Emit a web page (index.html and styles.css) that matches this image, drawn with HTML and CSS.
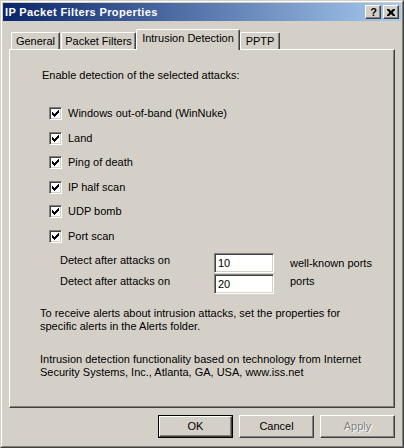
FILE: index.html
```html
<!DOCTYPE html>
<html>
<head>
<meta charset="utf-8">
<link rel="stylesheet" href="styles.css">
</head>
<body>
<div class="window">
  <div class="frame">
    <div class="titlebar">
      <span class="title">IP Packet Filters Properties</span>
      <div class="caption-btns">
        <span class="cbtn help">?</span>
        <span class="cbtn close"><svg width="8" height="7" viewBox="0 0 8 7"><path d="M0 0h2l2 2 2-2h2v1l-2 2v1l2 2v1h-2l-2-2-2 2h-2v-1l2-2v-1l-2-2z" fill="#000"/></svg></span>
      </div>
    </div>
    <div class="body">
      <div class="tabs">
        <div class="tab t-general">General</div>
        <div class="tab t-filters">Packet Filters</div>
        <div class="tab active t-ids">Intrusion Detection</div>
        <div class="tab t-pptp">PPTP</div>
      </div>
      <div class="panel">
        <p class="intro">Enable detection of the selected attacks:</p>
        <ul class="checks">
          <li><span class="cb"></span>Windows out-of-band (WinNuke)</li>
          <li><span class="cb"></span>Land</li>
          <li><span class="cb"></span>Ping of death</li>
          <li><span class="cb"></span>IP half scan</li>
          <li><span class="cb"></span>UDP bomb</li>
          <li><span class="cb"></span>Port scan</li>
        </ul>
        <div class="detect">
          <span class="dl">Detect after attacks on</span>
          <span class="field">10</span>
          <span class="unit u1">well-known ports</span>
          <span class="dl">Detect after attacks on</span>
          <span class="field">20</span>
          <span class="unit u2">ports</span>
        </div>
        <p class="note">To receive alerts about intrusion attacks, set the properties for<br>specific alerts in the Alerts folder.</p>
        <p class="note note2">Intrusion detection functionality based on technology from Internet<br>Security Systems, Inc., Atlanta, GA, USA, www.iss.net</p>
      </div>
      <div class="buttons">
        <span class="btn default"><span class="btn-in">OK</span></span>
        <span class="btn">Cancel</span>
        <span class="btn disabled">Apply</span>
      </div>
    </div>
  </div>
</div>
</body>
</html>
```
FILE: styles.css
```css
html, body {
  margin: 0;
  padding: 0;
  background: #d4d0c8;
}
body {
  width: 404px;
  height: 448px;
  font-family: "Liberation Sans", Arial, sans-serif;
  font-size: 11px;
  color: #000;
}
.window {
  box-sizing: border-box;
  width: 404px;
  height: 448px;
  border: 1px solid;
  border-color: #d4d0c8 #404040 #404040 #d4d0c8;
}
.frame {
  box-sizing: border-box;
  height: 100%;
  border: 1px solid;
  border-color: #ffffff #808080 #808080 #ffffff;
  padding: 1px;
  background: #d4d0c8;
}
.titlebar {
  height: 18px;
  background: linear-gradient(to right, #0a246a, #a6caf0);
  display: flex;
  align-items: center;
  justify-content: space-between;
}
.title {
  color: #fff;
  font-weight: bold;
  font-size: 11px;
  letter-spacing: 0.37px;
  padding-left: 2px;
  line-height: 13px;
}
.caption-btns {
  display: flex;
  gap: 2px;
  padding-right: 2px;
}
.cbtn {
  box-sizing: border-box;
  width: 16px;
  height: 14px;
  background: #d4d0c8;
  border: 1px solid;
  border-color: #ffffff #404040 #404040 #ffffff;
  box-shadow: inset -1px -1px #808080;
  display: flex;
  align-items: center;
  justify-content: center;
  font-weight: bold;
  font-size: 11px;
  line-height: 11px;
}
.cbtn.help { padding-left: 1px; }
.cbtn.close svg { display: block; }
.body {
  padding: 0 6px;
}
.tabs {
  height: 28px;
  display: flex;
  align-items: flex-end;
  padding-left: 2px;
  position: relative;
  z-index: 1;
}
.tab {
  box-sizing: border-box;
  height: 17px;
  border-top: 1px solid #fff;
  border-left: 1px solid #fff;
  border-right: 1px solid #404040;
  box-shadow: inset -1px 0 #808080;
  border-top-left-radius: 2px;
  border-top-right-radius: 2px;
  padding-top: 2px;
  line-height: 13px;
  text-align: center;
  background: #d4d0c8;
}
.t-general { width: 49px; margin-right: 1px; }
.t-filters { width: 75px; }
.t-ids { width: 104px; }
.t-pptp { width: 40px; }
.tab.active {
  height: 21px;
  margin-bottom: -1px;
  padding-top: 2px;
}
.panel {
  box-sizing: border-box;
  height: 359px;
  border: 1px solid;
  border-color: #ffffff #404040 #404040 #ffffff;
  box-shadow: inset -1px -1px #808080;
  padding: 19px 0 0 0;
}
p { margin: 0; }
.intro {
  line-height: 13px;
  padding-left: 32px;
}
.checks {
  list-style: none;
  margin: 25px 0 0 39px;
  padding: 0;
  display: flex;
  flex-direction: column;
  gap: 11.6px;
}
.checks li {
  display: flex;
  align-items: center;
  height: 13px;
  line-height: 13px;
}
.cb {
  box-sizing: border-box;
  width: 13px;
  height: 13px;
  margin-right: 6px;
  border: 1px solid;
  border-color: #808080 #ffffff #ffffff #808080;
  box-shadow: inset 1px 1px #404040, inset -1px -1px #d4d0c8;
  background: #fff url("data:image/svg+xml,%3Csvg xmlns='http://www.w3.org/2000/svg' width='11' height='11'%3E%3Cpath d='M2 4v3h1v1h1v1h1v-1h1v-1h1v-1h1v-1h1v-3h-1v1h-1v1h-1v1h-1v1h-1v-1h-1v-1h-1v-1z' fill='%23000'/%3E%3C/svg%3E") no-repeat 0 0;
}
.detect {
  display: grid;
  grid-template-columns: 154px 60px auto;
  grid-auto-rows: 21px;
  margin: 10px 0 0 50px;
}
.dl {
  line-height: 13px;
  padding-top: 1px;
}
.field {
  box-sizing: border-box;
  width: 60px;
  height: 20px;
  border: 1px solid;
  border-color: #808080 #ffffff #ffffff #808080;
  box-shadow: inset 1px 1px #404040, inset -1px -1px #d4d0c8;
  background: #fff;
  padding: 3px 0 0 3px;
  line-height: 13px;
}
.unit {
  padding-left: 16px;
  line-height: 13px;
}
.u1 { padding-top: 4px; }
.u2 { padding-top: 1px; }
.note {
  line-height: 13px;
  padding-left: 30px;
}
.detect + .note { margin-top: 12px; }
.note2 { margin-top: 20px; }
.buttons {
  display: flex;
  justify-content: flex-end;
  gap: 6px;
  margin-top: 7px;
}
.btn {
  box-sizing: border-box;
  width: 75px;
  height: 23px;
  border: 1px solid;
  border-color: #ffffff #404040 #404040 #ffffff;
  box-shadow: inset -1px -1px #808080;
  display: flex;
  align-items: center;
  justify-content: center;
  line-height: 13px;
}
.btn.default {
  border: 1px solid #000;
  box-shadow: none;
}
.btn-in {
  box-sizing: border-box;
  width: 100%;
  height: 100%;
  border: 1px solid;
  border-color: #ffffff #404040 #404040 #ffffff;
  box-shadow: inset -1px -1px #808080;
  display: flex;
  align-items: center;
  justify-content: center;
}
.btn.disabled {
  color: #808080;
  text-shadow: 1px 1px #ffffff;
}
```
